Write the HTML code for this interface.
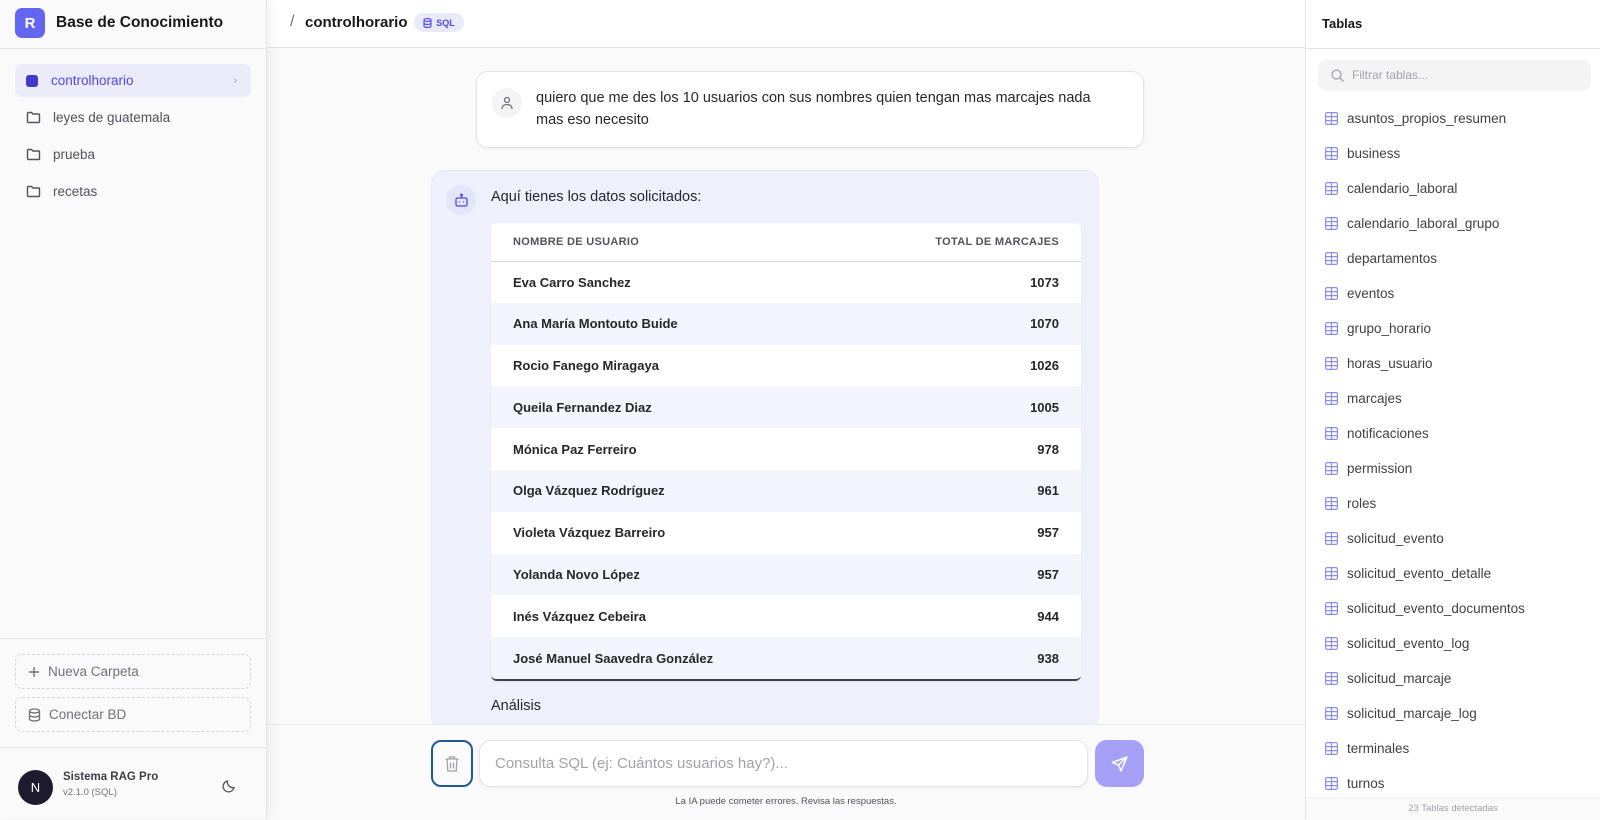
<!DOCTYPE html>
<html><head><meta charset="utf-8">
<style>
*{box-sizing:border-box;margin:0;padding:0}
body{width:1600px;height:819px;overflow:hidden;font-family:"Liberation Sans",sans-serif;background:#fafafa;position:relative;color:#18181b}
.side{position:absolute;left:0;top:0;width:267px;height:819px;background:#fafafa;border-right:1px solid #e4e4e7;box-shadow:4px 0 12px rgba(0,0,0,.06);z-index:3}
.logo{position:absolute;left:15px;top:8px;width:30px;height:30px;border-radius:7px;background:#6366f1;color:#fff;font-weight:bold;font-size:15px;display:flex;align-items:center;justify-content:center}
.brand{position:absolute;left:56px;top:14px;font-size:15.5px;font-weight:bold}
.hr{position:absolute;left:0;right:0;height:1px;background:#e4e4e7}
.nav{position:absolute;left:15px;width:236px;height:33px;border-radius:7px;display:flex;align-items:center;padding-left:11px;font-size:13.5px;color:#52525b}
.nav svg{margin-right:12px}
.btn{position:absolute;left:15px;width:236px;height:35px;border:1px dashed #d4d4d8;border-radius:7px;display:flex;align-items:center;padding-left:12px;font-size:13.5px;color:#71717a}
.btn svg{margin-right:8px}
.main{position:absolute;left:267px;top:0;width:1038px;height:819px;background:#fafafa}
.top{position:absolute;left:0;top:0;width:1038px;height:48px;background:#fff;border-bottom:1px solid #e4e4e7}
.right{position:absolute;left:1305px;top:0;width:295px;height:819px;background:#fff;border-left:1px solid #e4e4e7}
.ti{position:absolute;left:20px;display:flex;align-items:center;font-size:13.5px;color:#3f3f46}
.ti svg{margin-right:9px}
table{border-collapse:collapse;width:100%}
td,th{height:41.8px;padding:0 22px;font-size:13px;font-weight:bold;color:#27272a}
th{height:38px;font-size:11px;color:#52525b;letter-spacing:.3px;text-align:left;border-bottom:1.5px solid #d4d4d8}
tr:nth-child(odd) td{background:#f3f5fd}
td:last-child,th:last-child{text-align:right}
</style></head><body>
<div class="side">
 <div class="logo">R</div>
 <div class="brand">Base de Conocimiento</div>
 <div class="hr" style="top:48px"></div>
 <div class="nav" style="top:64px;background:#ebebfa;color:#4f46e5"><span style="width:12px;height:12px;background:#4338ca;border-radius:3px;margin-right:13px"></span>controlhorario<span style="position:absolute;right:14px;color:#a1a1aa;font-size:11px">›</span></div>
 <div class="nav" style="top:101px"><svg width="15" height="13" viewBox="0 0 15 13" fill="none" stroke="#52525b" stroke-width="1.4"><path d="M1.5 2.5a1 1 0 011-1h3l1.5 1.5h5.5a1 1 0 011 1v6.5a1 1 0 01-1 1h-10a1 1 0 01-1-1z"/></svg>leyes de guatemala</div>
 <div class="nav" style="top:138px"><svg width="15" height="13" viewBox="0 0 15 13" fill="none" stroke="#52525b" stroke-width="1.4"><path d="M1.5 2.5a1 1 0 011-1h3l1.5 1.5h5.5a1 1 0 011 1v6.5a1 1 0 01-1 1h-10a1 1 0 01-1-1z"/></svg>prueba</div>
 <div class="nav" style="top:175px"><svg width="15" height="13" viewBox="0 0 15 13" fill="none" stroke="#52525b" stroke-width="1.4"><path d="M1.5 2.5a1 1 0 011-1h3l1.5 1.5h5.5a1 1 0 011 1v6.5a1 1 0 01-1 1h-10a1 1 0 01-1-1z"/></svg>recetas</div>
 <div class="hr" style="top:638px"></div>
 <div class="btn" style="top:654px"><svg width="12" height="12" viewBox="0 0 12 12" stroke="#71717a" stroke-width="1.4"><path d="M6 1v10M1 6h10"/></svg>Nueva Carpeta</div>
 <div class="btn" style="top:697px"><svg width="13" height="14" viewBox="0 0 13 14" fill="none" stroke="#71717a" stroke-width="1.3"><ellipse cx="6.5" cy="3" rx="5" ry="2"/><path d="M1.5 3v8c0 1.1 2.2 2 5 2s5-.9 5-2V3M1.5 7c0 1.1 2.2 2 5 2s5-.9 5-2"/></svg>Conectar BD</div>
 <div class="hr" style="top:747px"></div>
 <div style="position:absolute;left:18px;top:770px;width:35px;height:35px;border-radius:50%;background:#1e1b2e;color:#fff;font-size:13px;display:flex;align-items:center;justify-content:center">N</div>
 <div style="position:absolute;left:63px;top:771px;font-size:11.5px;font-weight:bold;color:#3f3f46">Sistema RAG Pro</div>
 <div style="position:absolute;left:63px;top:787px;font-size:9.5px;color:#71717a">v2.1.0 (SQL)</div>
 <svg style="position:absolute;left:222px;top:779px" width="14" height="14" viewBox="0 0 14 14" fill="none" stroke="#52525b" stroke-width="1.3"><path d="M12 8.5A5.5 5.5 0 015.5 2 5.5 5.5 0 1012 8.5z"/></svg>
</div>
<div class="main">
 <div class="top">
  <span style="position:absolute;left:23px;top:13px;font-size:16px;color:#71717a">/</span>
  <span style="position:absolute;left:38px;top:14px;font-size:15px;font-weight:bold">controlhorario</span>
  <span style="position:absolute;left:147px;top:13px;width:50px;height:19px;border-radius:10px;background:#e8eaf8;color:#4f46e5;font-size:9px;font-weight:bold;display:flex;align-items:center;justify-content:center;gap:4px"><svg width="9" height="10" viewBox="0 0 9 10" fill="none" stroke="#4f46e5" stroke-width="1.1"><ellipse cx="4.5" cy="2" rx="3.5" ry="1.4"/><path d="M1 2v6c0 .8 1.6 1.4 3.5 1.4S8 8.8 8 8V2M1 5c0 .8 1.6 1.4 3.5 1.4S8 5.8 8 5"/></svg>SQL</span>
 </div>
 <div style="position:absolute;left:209px;top:71px;width:668px;height:77px;background:#fff;border:1px solid #e4e4e7;border-radius:12px;box-shadow:0 1px 3px rgba(0,0,0,.06)">
  <div style="position:absolute;left:15px;top:16px;width:30px;height:30px;border-radius:50%;background:#f4f4f5;display:flex;align-items:center;justify-content:center"><svg width="14" height="14" viewBox="0 0 14 14" fill="none" stroke="#71717a" stroke-width="1.3"><circle cx="7" cy="4" r="2.5"/><path d="M2 13c0-3 2.2-4.5 5-4.5s5 1.5 5 4.5"/></svg></div>
  <div style="position:absolute;left:59px;top:15px;width:580px;font-size:14.5px;line-height:22px;color:#27272a">quiero que me des los 10 usuarios con sus nombres quien tengan mas marcajes nada<br>mas eso necesito</div>
 </div>
 <div style="position:absolute;left:164px;top:170px;width:668px;height:560px;background:#eef1fc;border:1px solid #e6e9f5;border-radius:14px">
  <div style="position:absolute;left:14px;top:14px;width:30px;height:30px;border-radius:50%;background:#e3e6f8;display:flex;align-items:center;justify-content:center"><svg width="15" height="15" viewBox="0 0 15 15" fill="none" stroke="#4f46e5" stroke-width="1.3"><rect x="2" y="5" width="11" height="8" rx="1.5"/><path d="M7.5 5V2.5M5.5 8.5v1M9.5 8.5v1"/><circle cx="7.5" cy="2" r=".8"/></svg></div>
  <div style="position:absolute;left:59px;top:18px;font-size:14.5px;color:#27272a">Aquí tienes los datos solicitados:</div>
  <div style="position:absolute;left:59px;top:52px;width:590px;background:#fff;border-radius:6px;overflow:hidden;border-bottom:2px solid #3f3f46;box-shadow:0 1px 2px rgba(0,0,0,.05)">
  <table>
   <tr><th>NOMBRE DE USUARIO</th><th>TOTAL DE MARCAJES</th></tr>
   <tr><td>Eva Carro Sanchez</td><td>1073</td></tr>
   <tr><td>Ana María Montouto Buide</td><td>1070</td></tr>
   <tr><td>Rocio Fanego Miragaya</td><td>1026</td></tr>
   <tr><td>Queila Fernandez Diaz</td><td>1005</td></tr>
   <tr><td>Mónica Paz Ferreiro</td><td>978</td></tr>
   <tr><td>Olga Vázquez Rodríguez</td><td>961</td></tr>
   <tr><td>Violeta Vázquez Barreiro</td><td>957</td></tr>
   <tr><td>Yolanda Novo López</td><td>957</td></tr>
   <tr><td>Inés Vázquez Cebeira</td><td>944</td></tr>
   <tr><td>José Manuel Saavedra González</td><td>938</td></tr>
  </table></div>
  <div style="position:absolute;left:59px;top:527px;font-size:14.5px;color:#27272a">Análisis</div>
 </div>
 <div style="position:absolute;left:0;top:724px;width:1038px;height:95px;background:#fafafa;border-top:1px solid #e8e8ec">
  <div style="position:absolute;left:164px;top:15px;width:42px;height:47px;border:2px solid #1e5a96;border-radius:10px;display:flex;align-items:center;justify-content:center;background:#fafafa"><svg width="16" height="18" viewBox="0 0 16 18" fill="none" stroke="#a1a1aa" stroke-width="1.3"><path d="M1.5 4h13M5.5 4V2h5v2M3 4l.8 12h8.4L13 4M6.5 7.5v6M9.5 7.5v6"/></svg></div>
  <div style="position:absolute;left:212px;top:15px;width:609px;height:47px;background:#fff;border:1px solid #e4e4e7;border-radius:12px;box-shadow:0 1px 3px rgba(0,0,0,.06);padding:0 15px;display:flex;align-items:center;font-size:15px;color:#a1a1aa">Consulta SQL (ej: Cuántos usuarios hay?)...</div>
  <div style="position:absolute;left:828px;top:15px;width:49px;height:47px;border-radius:12px;background:#a5a0f5;display:flex;align-items:center;justify-content:center"><svg width="18" height="18" viewBox="0 0 18 18" fill="none" stroke="#fff" stroke-width="1.5" stroke-linejoin="round"><path d="M16 2L1.5 7.5l6 2.5 2.5 6z M16 2L7.5 10"/></svg></div>
  <div style="position:absolute;left:0;width:1038px;top:71px;text-align:center;font-size:9.5px;color:#52525b">La IA puede cometer errores. Revisa las respuestas.</div>
 </div>
</div>
<div class="right">
 <div style="position:absolute;left:16px;top:16px;font-size:13px;font-weight:bold">Tablas</div>
 <div class="hr" style="top:48px"></div>
 <div style="position:absolute;left:12px;top:60px;width:273px;height:30px;border-radius:8px;background:#f4f4f5;display:flex;align-items:center;padding-left:13px;font-size:12px;color:#a1a1aa"><svg width="13" height="13" viewBox="0 0 13 13" fill="none" stroke="#a1a1aa" stroke-width="1.3" style="margin-right:8px"><circle cx="5.5" cy="5.5" r="4.5"/><path d="M9 9l3.5 3.5"/></svg>Filtrar tablas...</div>
</div>
<div style="position:absolute;left:1305px;top:0;width:295px">
<div class="ti" style="top:111px"><svg width="13" height="13" viewBox="0 0 13 13" fill="none" stroke="#8b8ee8" stroke-width="1.2"><rect x=".6" y=".6" width="11.8" height="11.8" rx="1.5"/><path d="M.6 4.6h11.8M.6 8.6h11.8M6.5.6v11.8"/></svg>asuntos_propios_resumen</div>
<div class="ti" style="top:146px"><svg width="13" height="13" viewBox="0 0 13 13" fill="none" stroke="#8b8ee8" stroke-width="1.2"><rect x=".6" y=".6" width="11.8" height="11.8" rx="1.5"/><path d="M.6 4.6h11.8M.6 8.6h11.8M6.5.6v11.8"/></svg>business</div>
<div class="ti" style="top:181px"><svg width="13" height="13" viewBox="0 0 13 13" fill="none" stroke="#8b8ee8" stroke-width="1.2"><rect x=".6" y=".6" width="11.8" height="11.8" rx="1.5"/><path d="M.6 4.6h11.8M.6 8.6h11.8M6.5.6v11.8"/></svg>calendario_laboral</div>
<div class="ti" style="top:216px"><svg width="13" height="13" viewBox="0 0 13 13" fill="none" stroke="#8b8ee8" stroke-width="1.2"><rect x=".6" y=".6" width="11.8" height="11.8" rx="1.5"/><path d="M.6 4.6h11.8M.6 8.6h11.8M6.5.6v11.8"/></svg>calendario_laboral_grupo</div>
<div class="ti" style="top:251px"><svg width="13" height="13" viewBox="0 0 13 13" fill="none" stroke="#8b8ee8" stroke-width="1.2"><rect x=".6" y=".6" width="11.8" height="11.8" rx="1.5"/><path d="M.6 4.6h11.8M.6 8.6h11.8M6.5.6v11.8"/></svg>departamentos</div>
<div class="ti" style="top:286px"><svg width="13" height="13" viewBox="0 0 13 13" fill="none" stroke="#8b8ee8" stroke-width="1.2"><rect x=".6" y=".6" width="11.8" height="11.8" rx="1.5"/><path d="M.6 4.6h11.8M.6 8.6h11.8M6.5.6v11.8"/></svg>eventos</div>
<div class="ti" style="top:321px"><svg width="13" height="13" viewBox="0 0 13 13" fill="none" stroke="#8b8ee8" stroke-width="1.2"><rect x=".6" y=".6" width="11.8" height="11.8" rx="1.5"/><path d="M.6 4.6h11.8M.6 8.6h11.8M6.5.6v11.8"/></svg>grupo_horario</div>
<div class="ti" style="top:356px"><svg width="13" height="13" viewBox="0 0 13 13" fill="none" stroke="#8b8ee8" stroke-width="1.2"><rect x=".6" y=".6" width="11.8" height="11.8" rx="1.5"/><path d="M.6 4.6h11.8M.6 8.6h11.8M6.5.6v11.8"/></svg>horas_usuario</div>
<div class="ti" style="top:391px"><svg width="13" height="13" viewBox="0 0 13 13" fill="none" stroke="#8b8ee8" stroke-width="1.2"><rect x=".6" y=".6" width="11.8" height="11.8" rx="1.5"/><path d="M.6 4.6h11.8M.6 8.6h11.8M6.5.6v11.8"/></svg>marcajes</div>
<div class="ti" style="top:426px"><svg width="13" height="13" viewBox="0 0 13 13" fill="none" stroke="#8b8ee8" stroke-width="1.2"><rect x=".6" y=".6" width="11.8" height="11.8" rx="1.5"/><path d="M.6 4.6h11.8M.6 8.6h11.8M6.5.6v11.8"/></svg>notificaciones</div>
<div class="ti" style="top:461px"><svg width="13" height="13" viewBox="0 0 13 13" fill="none" stroke="#8b8ee8" stroke-width="1.2"><rect x=".6" y=".6" width="11.8" height="11.8" rx="1.5"/><path d="M.6 4.6h11.8M.6 8.6h11.8M6.5.6v11.8"/></svg>permission</div>
<div class="ti" style="top:496px"><svg width="13" height="13" viewBox="0 0 13 13" fill="none" stroke="#8b8ee8" stroke-width="1.2"><rect x=".6" y=".6" width="11.8" height="11.8" rx="1.5"/><path d="M.6 4.6h11.8M.6 8.6h11.8M6.5.6v11.8"/></svg>roles</div>
<div class="ti" style="top:531px"><svg width="13" height="13" viewBox="0 0 13 13" fill="none" stroke="#8b8ee8" stroke-width="1.2"><rect x=".6" y=".6" width="11.8" height="11.8" rx="1.5"/><path d="M.6 4.6h11.8M.6 8.6h11.8M6.5.6v11.8"/></svg>solicitud_evento</div>
<div class="ti" style="top:566px"><svg width="13" height="13" viewBox="0 0 13 13" fill="none" stroke="#8b8ee8" stroke-width="1.2"><rect x=".6" y=".6" width="11.8" height="11.8" rx="1.5"/><path d="M.6 4.6h11.8M.6 8.6h11.8M6.5.6v11.8"/></svg>solicitud_evento_detalle</div>
<div class="ti" style="top:601px"><svg width="13" height="13" viewBox="0 0 13 13" fill="none" stroke="#8b8ee8" stroke-width="1.2"><rect x=".6" y=".6" width="11.8" height="11.8" rx="1.5"/><path d="M.6 4.6h11.8M.6 8.6h11.8M6.5.6v11.8"/></svg>solicitud_evento_documentos</div>
<div class="ti" style="top:636px"><svg width="13" height="13" viewBox="0 0 13 13" fill="none" stroke="#8b8ee8" stroke-width="1.2"><rect x=".6" y=".6" width="11.8" height="11.8" rx="1.5"/><path d="M.6 4.6h11.8M.6 8.6h11.8M6.5.6v11.8"/></svg>solicitud_evento_log</div>
<div class="ti" style="top:671px"><svg width="13" height="13" viewBox="0 0 13 13" fill="none" stroke="#8b8ee8" stroke-width="1.2"><rect x=".6" y=".6" width="11.8" height="11.8" rx="1.5"/><path d="M.6 4.6h11.8M.6 8.6h11.8M6.5.6v11.8"/></svg>solicitud_marcaje</div>
<div class="ti" style="top:706px"><svg width="13" height="13" viewBox="0 0 13 13" fill="none" stroke="#8b8ee8" stroke-width="1.2"><rect x=".6" y=".6" width="11.8" height="11.8" rx="1.5"/><path d="M.6 4.6h11.8M.6 8.6h11.8M6.5.6v11.8"/></svg>solicitud_marcaje_log</div>
<div class="ti" style="top:741px"><svg width="13" height="13" viewBox="0 0 13 13" fill="none" stroke="#8b8ee8" stroke-width="1.2"><rect x=".6" y=".6" width="11.8" height="11.8" rx="1.5"/><path d="M.6 4.6h11.8M.6 8.6h11.8M6.5.6v11.8"/></svg>terminales</div>
<div class="ti" style="top:776px"><svg width="13" height="13" viewBox="0 0 13 13" fill="none" stroke="#8b8ee8" stroke-width="1.2"><rect x=".6" y=".6" width="11.8" height="11.8" rx="1.5"/><path d="M.6 4.6h11.8M.6 8.6h11.8M6.5.6v11.8"/></svg>turnos</div>
<div style="position:absolute;left:1px;right:0;top:797px;height:22px;background:#fafafa;border-top:1px solid #f0f0f2;text-align:center;font-size:9.5px;color:#a1a1aa;line-height:22px">23 Tablas detectadas</div>
</div>
</body></html>
